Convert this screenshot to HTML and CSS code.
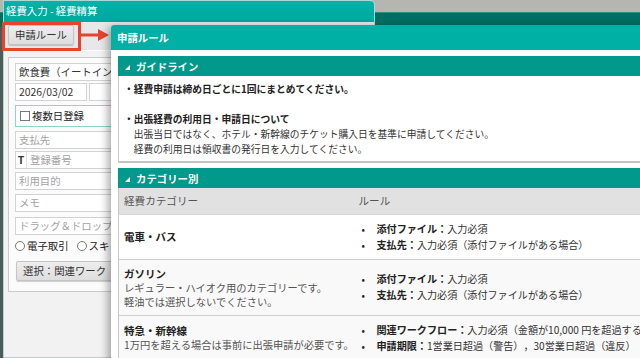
FILE: index.html
```html
<!DOCTYPE html>
<html lang="ja">
<head>
<meta charset="utf-8">
<title>申請ルール</title>
<link rel="stylesheet" href="styles.css">
</head>
<body>
<div class="desk">
  <div class="back-window"></div>

  <div class="window">
    <div class="win-title">経費入力 - 経費精算</div>
    <div class="toolbar"><button class="btn">申請ルール</button></div>
    <div class="win-body">
      <div class="panel">
        <div class="field select">飲食費（イートイン）</div>
        <div class="pair">
          <div class="field date">2026/03/02</div>
          <div class="field grow"></div>
        </div>
        <div class="field check"><span class="box"></span>複数日登録</div>
        <div class="field ph f-pay">支払先</div>
        <div class="field ph f-t"><span class="tmark">T</span>登録番号</div>
        <div class="field ph f-purpose">利用目的</div>
        <div class="field ph f-memo">メモ</div>
        <div class="field ph drop">ドラッグ＆ドロップ</div>
        <div class="radios"><span class="radio"></span>電子取引<span class="radio second"></span>スキャナ</div>
        <button class="btn wide">選択：関連ワーク</button>
      </div>
    </div>
  </div>

  <div class="callout"></div>
  <svg class="arrow" width="30" height="14" viewBox="0 0 30 14">
    <line x1="0" y1="7" x2="20" y2="7" stroke="#e8432e" stroke-width="3"/>
    <polygon points="18,1 29,7 18,13" fill="#e8432e"/>
  </svg>

  <div class="modal">
    <div class="modal-head">申請ルール</div>
    <div class="modal-body">
      <section class="sec">
        <div class="sec-head"><svg class="tri" width="5" height="5" viewBox="0 0 5 5"><polygon points="5,0 5,5 0,5" fill="#fff"/></svg>ガイドライン</div>
        <div class="guide">
          <p class="b">・経費申請は締め日ごとに1回にまとめてください。</p>
          <p class="blank">&nbsp;</p>
          <p class="b">・出張経費の利用日・申請日について</p>
          <p class="ind">出張当日ではなく、ホテル・新幹線のチケット購入日を基準に申請してください。</p>
          <p class="ind">経費の利用日は領収書の発行日を入力してください。</p>
        </div>
      </section>

      <section class="sec">
        <div class="sec-head"><svg class="tri" width="5" height="5" viewBox="0 0 5 5"><polygon points="5,0 5,5 0,5" fill="#fff"/></svg>カテゴリー別</div>
        <table class="cat">
          <colgroup><col class="c1"><col class="c2"></colgroup>
          <thead>
            <tr><th>経費カテゴリー</th><th>ルール</th></tr>
          </thead>
          <tbody>
            <tr>
              <td><div class="cname">電車・バス</div></td>
              <td><ul class="rules">
                <li><b>添付ファイル：</b>入力必須</li>
                <li><b>支払先：</b>入力必須（添付ファイルがある場合）</li>
              </ul></td>
            </tr>
            <tr class="alt">
              <td><div class="cname">ガソリン</div>
                <div class="desc">レギュラー・ハイオク用のカテゴリーです。</div>
                <div class="desc">軽油では選択しないでください。</div></td>
              <td><ul class="rules">
                <li><b>添付ファイル：</b>入力必須</li>
                <li><b>支払先：</b>入力必須（添付ファイルがある場合）</li>
              </ul></td>
            </tr>
            <tr class="alt">
              <td><div class="cname">特急・新幹線</div>
                <div class="desc">1万円を超える場合は事前に出張申請が必要です。</div></td>
              <td><ul class="rules">
                <li><b>関連ワークフロー：</b>入力必須（金額が10,000 円を超過する場合）</li>
                <li><b>申請期限：</b>1営業日超過（警告），30営業日超過（違反）</li>
              </ul></td>
            </tr>
          </tbody>
        </table>
      </section>
    </div>
  </div>
</div>
</body>
</html>
```

FILE: styles.css
```css
* { box-sizing: border-box; }

html, body {
  margin: 0;
  padding: 0;
  width: 640px;
  height: 358px;
  overflow: hidden;
}

body {
  font-family: "Noto Sans CJK JP", "Noto Sans", sans-serif;
  font-size: 10.4px;
  color: #333;
  text-spacing-trim: space-all;
}

.desk {
  position: relative;
  width: 640px;
  height: 358px;
  overflow: hidden;
  background: #b6b6b1;
}

.back-window {
  position: absolute;
  left: 0;
  top: 12px;
  width: 640px;
  height: 346px;
  border-top: 1px solid #2f8a7f;
  background: linear-gradient(to bottom, #006f63 0, #006f63 14px, #4f5957 14px);
}

/* ---------- left window ---------- */
.window {
  position: absolute;
  left: 3px;
  top: 0;
  width: 372px;
  height: 358px;
  border: 1px solid #a9d9d4;
  border-top-right-radius: 5px;
  background: #f2f2f2;
  display: flex;
  flex-direction: column;
}

.win-title {
  height: 21px;
  line-height: 20px;
  padding-left: 2px;
  color: #fff;
  font-size: 10.4px;
  background: linear-gradient(#00b2a7, #00a89d);
  border-top-right-radius: 4px;
}

.toolbar {
  height: 29px;
  padding: 3px 0 0 4px;
  background: #e8e8e8;
  border-bottom: 1px solid #fdfdfd;
}

.btn {
  font-family: inherit;
  font-size: 10.4px;
  color: #333;
  height: 20px;
  padding: 0 6px;
  line-height: 18px;
  border: 1px solid #c4c4c4;
  border-radius: 2px;
  background: linear-gradient(#ededed, #dedede);
  box-shadow: 0 1px 1px rgba(0, 0, 0, 0.18);
  cursor: default;
}

.win-body {
  flex: 1;
  padding: 6px 0 0 4px;
  background: #f2f2f2;
}

.panel {
  width: 362px;
  border: 1px solid #cacaca;
  background: #fbfbfb;
  padding: 5px 0 10px 6px;
  display: flex;
  flex-direction: column;
  align-items: flex-start;
}

.field {
  width: 350px;
  height: 18px;
  line-height: 16px;
  padding: 0 3px;
  border: 1px solid #d2d2d2;
  background: #fff;
  font-size: 10.4px;
  color: #333;
  white-space: nowrap;
  overflow: hidden;
}

.ph { color: #a3a3a3; }

.pair {
  display: flex;
  gap: 2px;
  margin-top: 2px;
}
.pair .date { width: 72px; }
.pair .grow { width: 276px; }

.check {
  margin-top: 4px;
  height: 22px;
  line-height: 20px;
  border-color: #8ed5ce;
  display: flex;
  align-items: center;
  padding-left: 4px;
  color: #222;
}
.box {
  width: 10px;
  height: 10px;
  border: 1px solid #777;
  background: #fff;
  margin-right: 2px;
}

.f-pay { margin-top: 4px; }
.f-t { margin-top: 2px; display: flex; padding-left: 0; }
.tmark {
  width: 11px;
  text-align: center;
  font-weight: bold;
  color: #333;
  border-right: 1px solid #e0e0e0;
  margin-right: 3px;
}
.f-purpose { margin-top: 3px; }
.f-memo { margin-top: 4px; }
.drop { margin-top: 5px; }

.radios {
  height: 20px;
  line-height: 20px;
  margin-top: 1px;
  display: flex;
  align-items: center;
  color: #222;
}
.radio {
  width: 10px;
  height: 10px;
  border: 1px solid #777;
  border-radius: 50%;
  background: #fff;
  margin-right: 2px;
}
.radio.second { margin-left: 8px; }

.btn.wide {
  margin-top: 5px;
  margin-left: 1px;
  padding: 0 6px;
  width: 140px;
  text-align: left;
}

/* ---------- callout ---------- */
.callout {
  position: absolute;
  left: 2px;
  top: 22px;
  width: 79px;
  height: 29px;
  border: 3px solid #e8432e;
}

.arrow {
  position: absolute;
  left: 80px;
  top: 28px;
}

/* ---------- modal ---------- */
.modal {
  position: absolute;
  left: 111px;
  top: 25px;
  width: 560px;
  height: 345px;
  background: #fff;
  border-top-left-radius: 3px;
  box-shadow: -3px 2px 8px rgba(0, 0, 0, 0.35);
  overflow: hidden;
}

.modal-head {
  height: 25px;
  line-height: 25px;
  padding-left: 6px;
  background: #00b0a5;
  color: #fff;
  font-weight: bold;
  font-size: 10.4px;
}

.modal-body {
  padding: 6px 0 0 7px;
}

.sec {
  width: 545px;
  margin-bottom: 5px;
}

.sec-head {
  height: 20px;
  display: flex;
  align-items: center;
  gap: 6px;
  padding-left: 7px;
  background: #00998b;
  color: #fff;
  font-weight: bold;
  font-size: 10.4px;
}
.tri { margin-top: 2px; }

.guide {
  border: 1px solid #c8c8c8;
  border-top: none;
  border-bottom: 2px solid #c4c4c4;
  padding: 6px 6px 4px 5px;
  font-size: 9.75px;
  line-height: 15px;
  color: #333;
}
.guide p { margin: 0; white-space: nowrap; }
.guide .b { font-weight: bold; color: #222; }
.guide .ind { padding-left: 9.75px; }

.cat {
  width: 545px;
  table-layout: fixed;
  border-collapse: collapse;
  border-left: 1px solid #c8c8c8;
}
.cat .c1 { width: 234px; }
.cat th {
  height: 26px;
  padding: 0 5px;
  text-align: left;
  font-weight: normal;
  font-size: 10.6px;
  color: #555;
  background: #e1e1e1;
  border-bottom: 1px solid #d4d4d4;
}
.cat th + th { padding-left: 6px; }
.cat td {
  padding: 6px 5px;
  vertical-align: middle;
  border-bottom: 1px solid #cfcfcf;
  background: #fff;
}
.cat td + td { padding-left: 6px; }
.cat tr.alt td { background: #f9f9f9; }

.cname {
  font-weight: bold;
  font-size: 10.5px;
  line-height: 15px;
  color: #222;
}
.desc {
  font-size: 10.25px;
  line-height: 14px;
  color: #555;
  white-space: nowrap;
}

.rules {
  list-style: none;
  margin: 0;
  padding: 0 0 0 3px;
}
.rules li {
  font-size: 10.1px;
  line-height: 16px;
  white-space: nowrap;
  color: #333;
  padding-left: 15px;
  text-indent: -15px;
}
.rules li::before {
  content: "•";
  display: inline-block;
  width: 15px;
  text-indent: 0;
  color: #222;
}
.rules b { color: #222; }
```
